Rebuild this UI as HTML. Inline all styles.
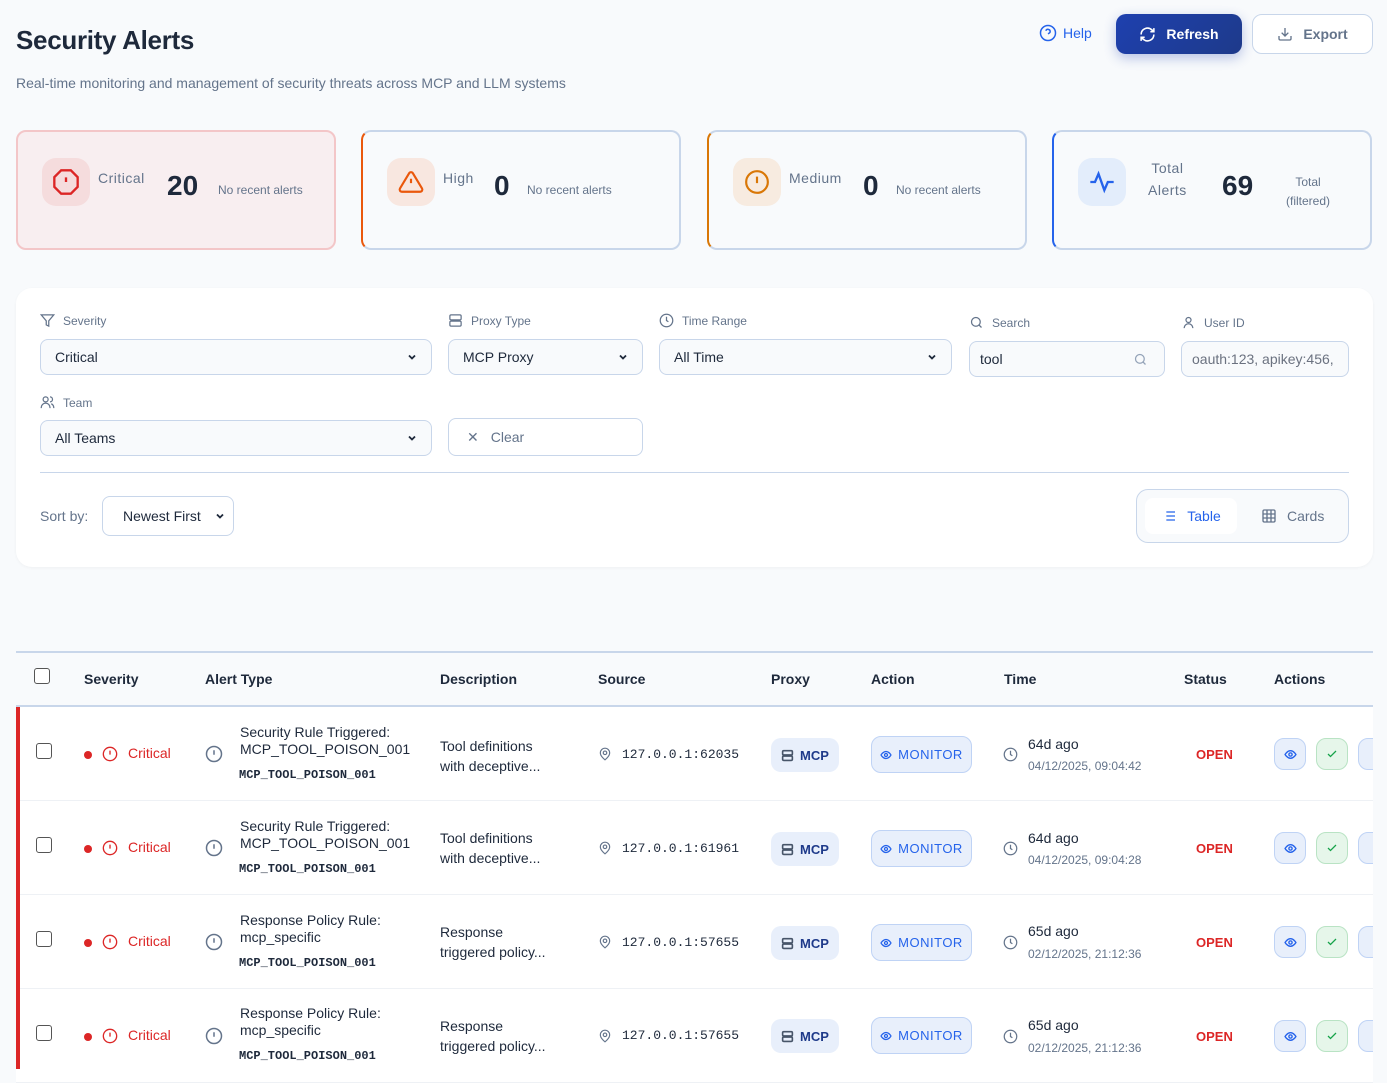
<!DOCTYPE html>
<html><head><meta charset="utf-8"><style>
*{box-sizing:border-box;margin:0;padding:0}
body{width:1387px;height:1069px;overflow:hidden;background:#f8fafc;font-family:"Liberation Sans",sans-serif;color:#1e293b;position:relative}
.a{position:absolute}
.card{position:absolute;top:130px;height:120px;width:320px;border:2px solid #c8d6ea;border-radius:10px;background:#f8fafc}
.ic{position:absolute;left:24px;top:26px;width:48px;height:48px;border-radius:14px;display:flex;align-items:center;justify-content:center}
.lbl{font-size:14px;color:#64748b;letter-spacing:.5px}
.num{font-size:28px;font-weight:bold;color:#1e293b}
.sm{font-size:12px;color:#64748b}
.fl{font-size:12px;color:#64748b;display:flex;align-items:center;gap:8px}
.sel{position:absolute;height:36px;border:1px solid #c8d6ea;border-radius:8px;background:#f8fafc;font-size:14px;color:#1e293b;padding:0 14px;display:flex;align-items:center;justify-content:space-between}
.th{position:absolute;top:671px;font-size:14px;font-weight:bold;color:#1e293b}
.row{position:absolute;left:16px;width:1357px;height:94px;border-bottom:1px solid #eef1f5;background:#fff}
.row>*{position:absolute}
.cb{left:20px;top:36px;width:16px;height:16px;border:1.5px solid #555;border-radius:3px;background:#fff}
.mono{font-family:"Liberation Mono",monospace}
.src{font-size:13px;top:40px;left:606px}
.badge{border-radius:10px;display:flex;align-items:center;justify-content:center;gap:6px;font-size:13px}
.btn{width:32px;height:32px;border-radius:10px;display:flex;align-items:center;justify-content:center;top:31px}
</style></head><body>

<div class="a" style="left:16px;top:25px;font-size:26px;font-weight:bold;color:#1e293b;letter-spacing:-.3px">Security Alerts</div>
<div class="a" style="left:16px;top:75px;font-size:14px;color:#64748b">Real-time monitoring and management of security threats across MCP and LLM systems</div>

<div class="a" style="left:1039px;top:24px;display:flex;align-items:center;gap:6px;color:#2563eb;font-size:14px">
<svg width="18" height="18" viewBox="0 0 24 24" fill="none" stroke="#2563eb" stroke-width="2"><circle cx="12" cy="12" r="10"/><path d="M9.1 9a3 3 0 0 1 5.8 1c0 2-3 3-3 3M12 17h.01"/></svg>Help</div>
<div class="a" style="left:1116px;top:14px;width:126px;height:40px;border-radius:10px;background:linear-gradient(135deg,#1e40af,#1e3a8a);box-shadow:0 4px 12px rgba(30,64,175,.3);color:#fff;font-weight:bold;font-size:14px;display:flex;align-items:center;justify-content:center;gap:10px">
<svg width="17" height="17" viewBox="0 0 24 24" fill="none" stroke="#fff" stroke-width="2.2"><path d="M3 12a9 9 0 0 1 15-6.7L21 8M21 3v5h-5M21 12a9 9 0 0 1-15 6.7L3 16M8 16H3v5"/></svg>Refresh</div>
<div class="a" style="left:1252px;top:14px;width:121px;height:40px;border-radius:10px;border:1px solid #c8d6ea;background:#fff;color:#64748b;font-weight:bold;font-size:14px;display:flex;align-items:center;justify-content:center;gap:10px">
<svg width="16" height="16" viewBox="0 0 24 24" fill="none" stroke="#64748b" stroke-width="2"><path d="M21 15v4a2 2 0 0 1-2 2H5a2 2 0 0 1-2-2v-4M7 10l5 5 5-5M12 15V3"/></svg>Export</div>

<!-- cards -->
<div class="card" style="left:16px;background:#f8eef0;border-color:#f3c6c8">
 <div class="ic" style="background:#f5dcdd"><svg width="28" height="28" viewBox="0 0 24 24" fill="none" stroke="#dc2626" stroke-width="2"><polygon points="7.86 2 16.14 2 22 7.86 22 16.14 16.14 22 7.86 22 2 16.14 2 7.86"/><path d="M12 8v4M12 16h.01"/></svg></div>
 <div class="a lbl" style="left:80px;top:38px">Critical</div>
 <div class="a num" style="left:149px;top:38px">20</div>
 <div class="a sm" style="left:200px;top:51px">No recent alerts</div>
</div>
<div class="card" style="left:361px;border-left-color:#ea580c">
 <div class="ic" style="background:#f8e7e0"><svg width="26" height="26" viewBox="0 0 24 24" fill="none" stroke="#ea580c" stroke-width="2"><path d="M10.3 3.9 1.8 18a2 2 0 0 0 1.7 3h17a2 2 0 0 0 1.7-3L13.7 3.9a2 2 0 0 0-3.4 0z"/><path d="M12 9v4M12 17h.01"/></svg></div>
 <div class="a lbl" style="left:80px;top:38px">High</div>
 <div class="a num" style="left:131px;top:38px">0</div>
 <div class="a sm" style="left:164px;top:51px">No recent alerts</div>
</div>
<div class="card" style="left:707px;border-left-color:#d97706">
 <div class="ic" style="background:#f7ebe0"><svg width="26" height="26" viewBox="0 0 24 24" fill="none" stroke="#d97706" stroke-width="2"><circle cx="12" cy="12" r="10"/><path d="M12 7v6M12 16.5h.01"/></svg></div>
 <div class="a lbl" style="left:80px;top:38px">Medium</div>
 <div class="a num" style="left:154px;top:38px">0</div>
 <div class="a sm" style="left:187px;top:51px">No recent alerts</div>
</div>
<div class="card" style="left:1052px;border-left-color:#2563eb">
 <div class="ic" style="background:#e3edfb"><svg width="28" height="28" viewBox="0 0 24 24" fill="none" stroke="#2563eb" stroke-width="2"><path d="M2 12h4l3-7 5 14 3-7h5"/></svg></div>
 <div class="a lbl" style="left:94px;top:25px;text-align:center;line-height:22px">Total<br>Alerts</div>
 <div class="a num" style="left:168px;top:38px">69</div>
 <div class="a sm" style="left:232px;top:41px;text-align:center;line-height:19px">Total<br>(filtered)</div>
</div>

<!-- filter panel -->
<div class="a" style="left:16px;top:288px;width:1357px;height:279px;background:#fff;border-radius:16px;box-shadow:0 1px 3px rgba(0,0,0,.04)"></div>
<div class="a fl" style="left:40px;top:313px"><svg width="15" height="15" viewBox="0 0 24 24" fill="none" stroke="#64748b" stroke-width="2"><path d="M22 3H2l8 9.5V19l4 2v-8.5z"/></svg>Severity</div>
<div class="a fl" style="left:448px;top:313px"><svg width="15" height="15" viewBox="0 0 24 24" fill="none" stroke="#64748b" stroke-width="2"><rect x="3" y="3" width="18" height="8" rx="2"/><rect x="3" y="13" width="18" height="8" rx="2"/></svg>Proxy Type</div>
<div class="a fl" style="left:659px;top:313px"><svg width="15" height="15" viewBox="0 0 24 24" fill="none" stroke="#64748b" stroke-width="2"><circle cx="12" cy="12" r="10"/><path d="M12 6v6l3 2"/></svg>Time Range</div>
<div class="a fl" style="left:969px;top:315px"><svg width="15" height="15" viewBox="0 0 24 24" fill="none" stroke="#64748b" stroke-width="2"><circle cx="11" cy="11" r="7"/><path d="m20 20-4-4"/></svg>Search</div>
<div class="a fl" style="left:1181px;top:315px"><svg width="15" height="15" viewBox="0 0 24 24" fill="none" stroke="#64748b" stroke-width="2"><circle cx="12" cy="8" r="4"/><path d="M5 21a7 7 0 0 1 14 0"/></svg>User ID</div>
<div class="sel" style="left:40px;top:339px;width:392px">Critical<svg width="10" height="10" viewBox="0 0 10 10" fill="none" stroke="#1e293b" stroke-width="1.8"><path d="M2 3.5l3 3 3-3"/></svg></div>
<div class="sel" style="left:448px;top:339px;width:195px">MCP Proxy<svg width="10" height="10" viewBox="0 0 10 10" fill="none" stroke="#1e293b" stroke-width="1.8"><path d="M2 3.5l3 3 3-3"/></svg></div>
<div class="sel" style="left:659px;top:339px;width:293px">All Time<svg width="10" height="10" viewBox="0 0 10 10" fill="none" stroke="#1e293b" stroke-width="1.8"><path d="M2 3.5l3 3 3-3"/></svg></div>
<div class="sel" style="left:969px;top:341px;width:196px;padding:0 16px 0 10px">tool<svg width="15" height="15" viewBox="0 0 24 24" fill="none" stroke="#94a3b8" stroke-width="2"><circle cx="11" cy="11" r="7"/><path d="m20 20-4-4"/></svg></div>
<div class="sel" style="left:1181px;top:341px;width:168px;padding:0 10px;color:#6b7280">oauth:123, apikey:456,</div>
<div class="a fl" style="left:40px;top:395px"><svg width="15" height="15" viewBox="0 0 24 24" fill="none" stroke="#64748b" stroke-width="2"><circle cx="9" cy="7" r="4"/><path d="M2 21v-1a7 7 0 0 1 14 0v1M16 3a4 4 0 0 1 0 8M22 21v-1a7 7 0 0 0-4-6"/></svg>Team</div>
<div class="sel" style="left:40px;top:420px;width:392px">All Teams<svg width="10" height="10" viewBox="0 0 10 10" fill="none" stroke="#1e293b" stroke-width="1.8"><path d="M2 3.5l3 3 3-3"/></svg></div>
<div class="sel" style="left:448px;top:418px;width:195px;height:38px;background:#fff;justify-content:flex-start;gap:12px;color:#64748b;padding-left:18px">✕ <span>Clear</span></div>
<div class="a" style="left:40px;top:472px;width:1309px;height:1px;background:#c8d6ea"></div>
<div class="a" style="left:40px;top:508px;font-size:14px;color:#64748b">Sort by:</div>
<div class="sel" style="left:102px;top:496px;width:132px;height:40px;background:#fff;padding:0 8px 0 20px">Newest First<svg width="10" height="10" viewBox="0 0 10 10" fill="none" stroke="#1e293b" stroke-width="1.8"><path d="M2 3.5l3 3 3-3"/></svg></div>
<div class="a" style="left:1136px;top:489px;width:213px;height:54px;border:1px solid #c8d6ea;border-radius:12px;background:#f8fafc"></div>
<div class="a" style="left:1145px;top:498px;width:92px;height:36px;border-radius:8px;background:#fff;display:flex;align-items:center;justify-content:center;gap:10px;color:#2563eb;font-size:14px"><svg width="16" height="16" viewBox="0 0 24 24" fill="none" stroke="#2563eb" stroke-width="2"><path d="M8 6h13M8 12h13M8 18h13M3 6h.01M3 12h.01M3 18h.01"/></svg>Table</div>
<div class="a" style="left:1261px;top:508px;display:flex;align-items:center;gap:10px;color:#64748b;font-size:14px"><svg width="16" height="16" viewBox="0 0 24 24" fill="none" stroke="#64748b" stroke-width="2"><rect x="3" y="3" width="18" height="18" rx="2"/><path d="M3 9h18M3 15h18M9 3v18M15 3v18"/></svg>Cards</div>

<!-- table -->
<div class="a" style="left:16px;top:620px;width:1357px;height:449px;background:#f8fafc"></div>
<div class="a" style="left:16px;top:651px;width:1357px;height:2px;background:#c8d6ea"></div>
<div class="a" style="left:34px;top:668px;width:16px;height:16px;border:1.5px solid #555;border-radius:3px;background:#fff"></div>
<div class="th" style="left:84px">Severity</div>
<div class="th" style="left:205px">Alert Type</div>
<div class="th" style="left:440px">Description</div>
<div class="th" style="left:598px">Source</div>
<div class="th" style="left:771px">Proxy</div>
<div class="th" style="left:871px">Action</div>
<div class="th" style="left:1004px">Time</div>
<div class="th" style="left:1184px">Status</div>
<div class="th" style="left:1274px">Actions</div>
<div class="a" style="left:16px;top:705px;width:1357px;height:3px;background:#c8d6ea"></div>
<div class="a" style="left:16px;top:707px;width:4px;height:362px;background:#dc2626;z-index:2"></div>

<div class="row" style="top:707px">
 <div class="cb"></div>
 <div style="left:68px;top:44px;width:8px;height:8px;border-radius:50%;background:#dc2626"></div>
 <svg style="left:86px;top:39px" width="16" height="16" viewBox="0 0 24 24" fill="none" stroke="#dc2626" stroke-width="2"><circle cx="12" cy="12" r="10"/><path d="M12 7v6M12 16.5h.01"/></svg>
 <div style="left:112px;top:38px;font-size:14px;color:#dc2626">Critical</div>
 <svg style="left:189px;top:38px" width="18" height="18" viewBox="0 0 24 24" fill="none" stroke="#64748b" stroke-width="2"><circle cx="12" cy="12" r="10"/><path d="M12 7v6M12 16.5h.01"/></svg>
 <div style="left:224px;top:17px;font-size:14px;line-height:17px">Security Rule Triggered:<br>MCP_TOOL_POISON_001</div>
 <div class="mono" style="left:223px;top:61px;font-size:12px;font-weight:bold">MCP_TOOL_POISON_001</div>
 <div style="left:424px;top:29px;font-size:14px;line-height:20px">Tool definitions<br>with deceptive...</div>
 <svg style="left:582px;top:40px" width="14" height="14" viewBox="0 0 24 24" fill="none" stroke="#64748b" stroke-width="2"><path d="M20 10c0 6-8 12-8 12s-8-6-8-12a8 8 0 0 1 16 0z"/><circle cx="12" cy="10" r="3"/></svg>
 <div class="mono src">127.0.0.1:62035</div>
 <div class="badge" style="left:755px;top:31px;width:68px;height:34px;background:#e8effb;color:#1e3a8a;font-weight:bold"><svg width="13" height="13" viewBox="0 0 24 24" fill="none" stroke="#475569" stroke-width="3"><rect x="3" y="3" width="18" height="8" rx="2"/><rect x="3" y="13" width="18" height="8" rx="2"/></svg>MCP</div>
 <div class="badge" style="left:855px;top:29px;width:101px;height:37px;background:#e8effb;border:1px solid #bfd3f5;color:#2563eb;letter-spacing:.5px"><svg width="12" height="12" viewBox="0 0 24 24" fill="none" stroke="#2563eb" stroke-width="2.5"><path d="M2 12s4-7 10-7 10 7 10 7-4 7-10 7S2 12 2 12z"/><circle cx="12" cy="12" r="3"/></svg>MONITOR</div>
 <svg style="left:987px;top:40px" width="15" height="15" viewBox="0 0 24 24" fill="none" stroke="#64748b" stroke-width="2"><circle cx="12" cy="12" r="10"/><path d="M12 6v6l3 2"/></svg>
 <div style="left:1012px;top:29px;font-size:14px">64d ago</div>
 <div style="left:1012px;top:52px;font-size:12px;color:#64748b">04/12/2025, 09:04:42</div>
 <div style="left:1180px;top:40px;font-size:13px;font-weight:bold;color:#dc2626">OPEN</div>
 <div class="btn" style="left:1258px;background:#e8effb;border:1px solid #bfd3f5"><svg width="13" height="13" viewBox="0 0 24 24" fill="none" stroke="#2563eb" stroke-width="2.5"><path d="M2 12s4-7 10-7 10 7 10 7-4 7-10 7S2 12 2 12z"/><circle cx="12" cy="12" r="3"/></svg></div>
 <div class="btn" style="left:1300px;background:#e6f6ea;border:1px solid #b9e3c4"><svg width="12" height="12" viewBox="0 0 24 24" fill="none" stroke="#16a34a" stroke-width="2.5"><path d="M20 6 9 17l-5-5"/></svg></div>
 <div class="btn" style="left:1342px;background:#e8effb;border:1px solid #bfd3f5"></div>
</div>

<div class="row" style="top:801px">
 <div class="cb"></div>
 <div style="left:68px;top:44px;width:8px;height:8px;border-radius:50%;background:#dc2626"></div>
 <svg style="left:86px;top:39px" width="16" height="16" viewBox="0 0 24 24" fill="none" stroke="#dc2626" stroke-width="2"><circle cx="12" cy="12" r="10"/><path d="M12 7v6M12 16.5h.01"/></svg>
 <div style="left:112px;top:38px;font-size:14px;color:#dc2626">Critical</div>
 <svg style="left:189px;top:38px" width="18" height="18" viewBox="0 0 24 24" fill="none" stroke="#64748b" stroke-width="2"><circle cx="12" cy="12" r="10"/><path d="M12 7v6M12 16.5h.01"/></svg>
 <div style="left:224px;top:17px;font-size:14px;line-height:17px">Security Rule Triggered:<br>MCP_TOOL_POISON_001</div>
 <div class="mono" style="left:223px;top:61px;font-size:12px;font-weight:bold">MCP_TOOL_POISON_001</div>
 <div style="left:424px;top:27px;font-size:14px;line-height:20px">Tool definitions<br>with deceptive...</div>
 <svg style="left:582px;top:40px" width="14" height="14" viewBox="0 0 24 24" fill="none" stroke="#64748b" stroke-width="2"><path d="M20 10c0 6-8 12-8 12s-8-6-8-12a8 8 0 0 1 16 0z"/><circle cx="12" cy="10" r="3"/></svg>
 <div class="mono src">127.0.0.1:61961</div>
 <div class="badge" style="left:755px;top:31px;width:68px;height:34px;background:#e8effb;color:#1e3a8a;font-weight:bold"><svg width="13" height="13" viewBox="0 0 24 24" fill="none" stroke="#475569" stroke-width="3"><rect x="3" y="3" width="18" height="8" rx="2"/><rect x="3" y="13" width="18" height="8" rx="2"/></svg>MCP</div>
 <div class="badge" style="left:855px;top:29px;width:101px;height:37px;background:#e8effb;border:1px solid #bfd3f5;color:#2563eb;letter-spacing:.5px"><svg width="12" height="12" viewBox="0 0 24 24" fill="none" stroke="#2563eb" stroke-width="2.5"><path d="M2 12s4-7 10-7 10 7 10 7-4 7-10 7S2 12 2 12z"/><circle cx="12" cy="12" r="3"/></svg>MONITOR</div>
 <svg style="left:987px;top:40px" width="15" height="15" viewBox="0 0 24 24" fill="none" stroke="#64748b" stroke-width="2"><circle cx="12" cy="12" r="10"/><path d="M12 6v6l3 2"/></svg>
 <div style="left:1012px;top:29px;font-size:14px">64d ago</div>
 <div style="left:1012px;top:52px;font-size:12px;color:#64748b">04/12/2025, 09:04:28</div>
 <div style="left:1180px;top:40px;font-size:13px;font-weight:bold;color:#dc2626">OPEN</div>
 <div class="btn" style="left:1258px;background:#e8effb;border:1px solid #bfd3f5"><svg width="13" height="13" viewBox="0 0 24 24" fill="none" stroke="#2563eb" stroke-width="2.5"><path d="M2 12s4-7 10-7 10 7 10 7-4 7-10 7S2 12 2 12z"/><circle cx="12" cy="12" r="3"/></svg></div>
 <div class="btn" style="left:1300px;background:#e6f6ea;border:1px solid #b9e3c4"><svg width="12" height="12" viewBox="0 0 24 24" fill="none" stroke="#16a34a" stroke-width="2.5"><path d="M20 6 9 17l-5-5"/></svg></div>
 <div class="btn" style="left:1342px;background:#e8effb;border:1px solid #bfd3f5"></div>
</div>

<div class="row" style="top:895px">
 <div class="cb"></div>
 <div style="left:68px;top:44px;width:8px;height:8px;border-radius:50%;background:#dc2626"></div>
 <svg style="left:86px;top:39px" width="16" height="16" viewBox="0 0 24 24" fill="none" stroke="#dc2626" stroke-width="2"><circle cx="12" cy="12" r="10"/><path d="M12 7v6M12 16.5h.01"/></svg>
 <div style="left:112px;top:38px;font-size:14px;color:#dc2626">Critical</div>
 <svg style="left:189px;top:38px" width="18" height="18" viewBox="0 0 24 24" fill="none" stroke="#64748b" stroke-width="2"><circle cx="12" cy="12" r="10"/><path d="M12 7v6M12 16.5h.01"/></svg>
 <div style="left:224px;top:17px;font-size:14px;line-height:17px">Response Policy Rule:<br>mcp_specific</div>
 <div class="mono" style="left:223px;top:61px;font-size:12px;font-weight:bold">MCP_TOOL_POISON_001</div>
 <div style="left:424px;top:27px;font-size:14px;line-height:20px">Response<br>triggered policy...</div>
 <svg style="left:582px;top:40px" width="14" height="14" viewBox="0 0 24 24" fill="none" stroke="#64748b" stroke-width="2"><path d="M20 10c0 6-8 12-8 12s-8-6-8-12a8 8 0 0 1 16 0z"/><circle cx="12" cy="10" r="3"/></svg>
 <div class="mono src">127.0.0.1:57655</div>
 <div class="badge" style="left:755px;top:31px;width:68px;height:34px;background:#e8effb;color:#1e3a8a;font-weight:bold"><svg width="13" height="13" viewBox="0 0 24 24" fill="none" stroke="#475569" stroke-width="3"><rect x="3" y="3" width="18" height="8" rx="2"/><rect x="3" y="13" width="18" height="8" rx="2"/></svg>MCP</div>
 <div class="badge" style="left:855px;top:29px;width:101px;height:37px;background:#e8effb;border:1px solid #bfd3f5;color:#2563eb;letter-spacing:.5px"><svg width="12" height="12" viewBox="0 0 24 24" fill="none" stroke="#2563eb" stroke-width="2.5"><path d="M2 12s4-7 10-7 10 7 10 7-4 7-10 7S2 12 2 12z"/><circle cx="12" cy="12" r="3"/></svg>MONITOR</div>
 <svg style="left:987px;top:40px" width="15" height="15" viewBox="0 0 24 24" fill="none" stroke="#64748b" stroke-width="2"><circle cx="12" cy="12" r="10"/><path d="M12 6v6l3 2"/></svg>
 <div style="left:1012px;top:28px;font-size:14px">65d ago</div>
 <div style="left:1012px;top:52px;font-size:12px;color:#64748b">02/12/2025, 21:12:36</div>
 <div style="left:1180px;top:40px;font-size:13px;font-weight:bold;color:#dc2626">OPEN</div>
 <div class="btn" style="left:1258px;background:#e8effb;border:1px solid #bfd3f5"><svg width="13" height="13" viewBox="0 0 24 24" fill="none" stroke="#2563eb" stroke-width="2.5"><path d="M2 12s4-7 10-7 10 7 10 7-4 7-10 7S2 12 2 12z"/><circle cx="12" cy="12" r="3"/></svg></div>
 <div class="btn" style="left:1300px;background:#e6f6ea;border:1px solid #b9e3c4"><svg width="12" height="12" viewBox="0 0 24 24" fill="none" stroke="#16a34a" stroke-width="2.5"><path d="M20 6 9 17l-5-5"/></svg></div>
 <div class="btn" style="left:1342px;background:#e8effb;border:1px solid #bfd3f5"></div>
</div>

<div class="row" style="top:989px">
 <div class="cb"></div>
 <div style="left:68px;top:44px;width:8px;height:8px;border-radius:50%;background:#dc2626"></div>
 <svg style="left:86px;top:39px" width="16" height="16" viewBox="0 0 24 24" fill="none" stroke="#dc2626" stroke-width="2"><circle cx="12" cy="12" r="10"/><path d="M12 7v6M12 16.5h.01"/></svg>
 <div style="left:112px;top:38px;font-size:14px;color:#dc2626">Critical</div>
 <svg style="left:189px;top:38px" width="18" height="18" viewBox="0 0 24 24" fill="none" stroke="#64748b" stroke-width="2"><circle cx="12" cy="12" r="10"/><path d="M12 7v6M12 16.5h.01"/></svg>
 <div style="left:224px;top:16px;font-size:14px;line-height:17px">Response Policy Rule:<br>mcp_specific</div>
 <div class="mono" style="left:223px;top:60px;font-size:12px;font-weight:bold">MCP_TOOL_POISON_001</div>
 <div style="left:424px;top:27px;font-size:14px;line-height:20px">Response<br>triggered policy...</div>
 <svg style="left:582px;top:40px" width="14" height="14" viewBox="0 0 24 24" fill="none" stroke="#64748b" stroke-width="2"><path d="M20 10c0 6-8 12-8 12s-8-6-8-12a8 8 0 0 1 16 0z"/><circle cx="12" cy="10" r="3"/></svg>
 <div class="mono src" style="top:39px">127.0.0.1:57655</div>
 <div class="badge" style="left:755px;top:30px;width:68px;height:34px;background:#e8effb;color:#1e3a8a;font-weight:bold"><svg width="13" height="13" viewBox="0 0 24 24" fill="none" stroke="#475569" stroke-width="3"><rect x="3" y="3" width="18" height="8" rx="2"/><rect x="3" y="13" width="18" height="8" rx="2"/></svg>MCP</div>
 <div class="badge" style="left:855px;top:28px;width:101px;height:37px;background:#e8effb;border:1px solid #bfd3f5;color:#2563eb;letter-spacing:.5px"><svg width="12" height="12" viewBox="0 0 24 24" fill="none" stroke="#2563eb" stroke-width="2.5"><path d="M2 12s4-7 10-7 10 7 10 7-4 7-10 7S2 12 2 12z"/><circle cx="12" cy="12" r="3"/></svg>MONITOR</div>
 <svg style="left:987px;top:40px" width="15" height="15" viewBox="0 0 24 24" fill="none" stroke="#64748b" stroke-width="2"><circle cx="12" cy="12" r="10"/><path d="M12 6v6l3 2"/></svg>
 <div style="left:1012px;top:28px;font-size:14px">65d ago</div>
 <div style="left:1012px;top:52px;font-size:12px;color:#64748b">02/12/2025, 21:12:36</div>
 <div style="left:1180px;top:40px;font-size:13px;font-weight:bold;color:#dc2626">OPEN</div>
 <div class="btn" style="left:1258px;background:#e8effb;border:1px solid #bfd3f5"><svg width="13" height="13" viewBox="0 0 24 24" fill="none" stroke="#2563eb" stroke-width="2.5"><path d="M2 12s4-7 10-7 10 7 10 7-4 7-10 7S2 12 2 12z"/><circle cx="12" cy="12" r="3"/></svg></div>
 <div class="btn" style="left:1300px;background:#e6f6ea;border:1px solid #b9e3c4"><svg width="12" height="12" viewBox="0 0 24 24" fill="none" stroke="#16a34a" stroke-width="2.5"><path d="M20 6 9 17l-5-5"/></svg></div>
 <div class="btn" style="left:1342px;background:#e8effb;border:1px solid #bfd3f5"></div>
</div>
<div class="a" style="left:1373px;top:600px;width:14px;height:469px;background:#f8fafc;z-index:3"></div>
</body></html>
